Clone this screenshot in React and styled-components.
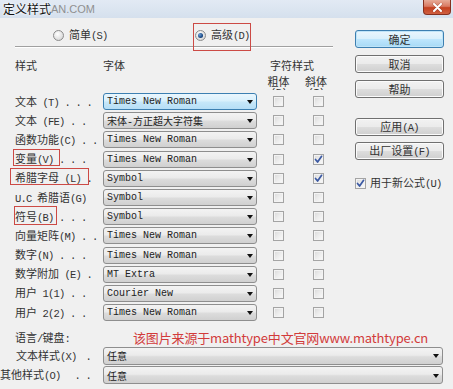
import React from 'react';
import styled, { createGlobalStyle, css } from 'styled-components';

const SIM = `"Noto Sans CJK SC", sans-serif`;
const SEL = `"Liberation Mono", "Noto Sans CJK SC", monospace`;

const Global = createGlobalStyle`
  html, body { margin: 0; padding: 0; background: #f0f0f0; }
  body { font-family: ${SIM}; }
`;

const Window = styled.div`
  width: 453px;
  height: 389px;
  overflow: hidden;
  background: #f0f0f0;
  font-family: ${SIM};
  font-size: 11px;
  color: #2a2a2a;
`;

/* half-width Latin run, like the Latin of SimSun */
const Lat = styled.span`
  font-family: "Liberation Mono", monospace;
  font-size: 10.5px;
  letter-spacing: -0.8px;
`;

const CJK_RE = /([\u2e80-\uffef]+)/;
const T = ({ children }) => (
  <>
    {String(children)
      .split(CJK_RE)
      .filter(Boolean)
      .map((s, i) =>
        CJK_RE.test(s) ? <React.Fragment key={i}>{s}</React.Fragment> : <Lat key={i}>{s}</Lat>
      )}
  </>
);

const TitleBar = styled.div`
  height: 18px;
  display: flex;
  align-items: flex-start;
  background: linear-gradient(#e2eaf4, #d5e0ed);
  padding-left: 3px;
`;

const Title = styled.span`
  font-family: "Noto Sans CJK SC", sans-serif;
  font-size: 12px;
  line-height: 18px;
  color: #111;
  text-shadow: 0 0 3px #fff, 0 0 2px #fff;
`;

const TitleGhost = styled.span`
  font-family: "Liberation Sans", sans-serif;
  font-size: 11px;
  line-height: 18px;
  color: #909090;
`;

const CloseBtn = styled.div`
  margin-left: auto;
  margin-right: 2px;
  width: 28px;
  height: 15px;
  box-sizing: border-box;
  border: 1px solid #86301f;
  border-top: none;
  border-radius: 0 0 4px 4px;
  background: linear-gradient(#e7ab98 0%, #d97a62 45%, #c4401f 55%, #cf6042 100%);
  display: flex;
  align-items: center;
  justify-content: center;
`;

const Upper = styled.div`
  display: flex;
`;

const Main = styled.div`
  width: 337px;
  padding-left: 15px;
  box-sizing: border-box;
`;

const Side = styled.div`
  width: 89px;
  margin-left: 18px;
  display: flex;
  flex-direction: column;
`;

const RadioRow = styled.div`
  margin-top: 9px;
  height: 16px;
  display: flex;
  align-items: center;
  padding-left: 38px;
`;

const RadioOption = styled.label`
  position: relative;
  display: flex;
  align-items: center;
  gap: 5px;
  width: ${p => p.$w || 'auto'};
  line-height: 16px;
  color: #333;
  ${p => p.$mark && css`
    &::after {
      content: '';
      position: absolute;
      inset: -3px -1px -7px -2px;
      border: 1px solid #cc4a45;
      pointer-events: none;
    }
  `}
`;

const Radio = styled.span`
  width: 11px;
  height: 11px;
  box-sizing: border-box;
  border-radius: 50%;
  border: 1px solid #8c8c8c;
  background: radial-gradient(circle at 40% 35%, #ffffff, #dcdcdc 70%, #c8c8c8);
  display: flex;
  align-items: center;
  justify-content: center;
  ${p => p.$on && css`
    &::after {
      content: '';
      width: 5px;
      height: 5px;
      border-radius: 50%;
      background: radial-gradient(circle at 35% 35%, #6fa0d8, #1a4a86 60%, #0b2c5a);
    }
  `}
`;

const Mark = styled.span`
  position: relative;
  &::after {
    content: '';
    position: absolute;
    inset: ${p => p.$inset};
    border: 1px solid #cc4a45;
    pointer-events: none;
  }
`;

const Separator = styled.div`
  margin-top: 3px;
  width: 318px;
  border-top: 1px solid #a0a0a0;
  border-bottom: 1px solid #ffffff;
`;

const HeadGrid = styled.div`
  margin-top: 10px;
  display: grid;
  grid-template-columns: 88px 154px 80px;
  line-height: 14px;
  color: #333;
`;

const HeadCell = styled.div`
  padding-left: ${p => p.$pl || 0}px;
  white-space: nowrap;
`;

const SubHead = styled.div`
  margin-top: 4px;
  height: 14px;
  overflow: hidden;
  display: grid;
  grid-template-columns: 88px 154px 43px 37px;
  line-height: 10px;
  color: #333;
`;

const SubCell = styled.div`
  grid-column: ${p => p.$col};
  text-align: center;
  padding-right: ${p => p.$pr || 0}px;
`;

const StyleGrid = styled.div`
  margin-top: 2px;
  display: grid;
  grid-template-columns: 88px 154px 43px 37px;
  grid-auto-rows: 19.2px;
  align-items: center;
`;

const Label = styled.div`
  white-space: pre;
  line-height: 14px;
  color: #333;
`;

const Select = styled.div`
  height: ${p => p.$h || 17}px;
  box-sizing: border-box;
  border: 1px solid #8e8e8e;
  border-radius: 3px;
  background: linear-gradient(#f3f3f3 0%, #ebebeb 45%, #dcdcdc 55%, #d0d0d0 100%);
  display: flex;
  align-items: center;
  justify-content: space-between;
  padding: 0 3px 0 3px;
  font-family: ${SEL};
  font-size: 10px;
  color: #222;
  white-space: nowrap;
  ${p => p.$active && css`
    border-color: #3c7fb1;
    background: linear-gradient(#eaf6fd 0%, #d9f0fc 45%, #c6e7f9 55%, #b6def6 100%);
  `}
`;

const Arrow = styled.span`
  width: 0;
  height: 0;
  border-left: 3.5px solid transparent;
  border-right: 3.5px solid transparent;
  border-top: 4px solid #111;
  margin-top: 1px;
`;

const CheckCell = styled.div`
  display: flex;
  justify-content: center;
`;

const Box = styled.span`
  width: 11px;
  height: 11px;
  box-sizing: border-box;
  border: 1px solid #a4a4a4;
  background: linear-gradient(135deg, #d9d9d9 0%, #ececec 50%, #fafafa 100%);
  box-shadow: inset 0 0 0 1px #f3f3f3;
  display: inline-flex;
  align-items: center;
  justify-content: center;
  flex: none;
`;

const Button = styled.button`
  margin: ${p => p.$mt}px 0 0 0;
  width: 89px;
  height: 18px;
  box-sizing: border-box;
  padding: 0;
  border: 1px solid #707070;
  border-radius: 3px;
  background: linear-gradient(#f2f2f2 0%, #ebebeb 48%, #dddddd 52%, #cfcfcf 100%);
  box-shadow: inset 0 0 0 1px #fbfbfb;
  font-family: ${SIM};
  font-size: 11px;
  line-height: 14px;
  color: #333;
  ${p => p.$primary && css`
    border-color: #3c7fb1;
    background: linear-gradient(#eaf6fd 0%, #d9f0fc 48%, #bee6fd 52%, #a7d9f5 100%);
    box-shadow: inset 0 0 0 1px #bfe4f8;
  `}
`;

const CheckRow = styled.div`
  margin-top: 15px;
  display: flex;
  align-items: center;
  gap: 4px;
  line-height: 14px;
  color: #333;
  white-space: nowrap;
`;

const LangRow = styled.div`
  margin-top: 8px;
  padding-left: 15px;
  display: grid;
  grid-template-columns: 118px auto;
  align-items: center;
  height: 14px;
  line-height: 14px;
  color: #333;
`;

const Watermark = styled.span`
  font-family: "Noto Sans CJK SC", sans-serif;
  font-size: 13px;
  letter-spacing: -0.15px;
  line-height: 16px;
  color: #d23b3b;
  white-space: nowrap;
`;

const BottomGrid = styled.div`
  margin-top: 1.5px;
  display: grid;
  grid-template-columns: 103px 340px;
  grid-auto-rows: 19.5px;
  align-items: center;
`;

const BottomLabel = styled.div`
  display: flex;
  padding-left: ${p => p.$pl}px;
  padding-right: 12px;
  white-space: pre;
  line-height: 14px;
  color: #333;
`;

const Dots = styled.span`
  margin-left: auto;
`;

const CheckMark = () => (
  <svg width="9" height="9" viewBox="0 0 9 9">
    <path d="M1.5 4.5 L3.6 7 L7.6 1.3" fill="none" stroke="#3b59a3" strokeWidth="1.7" strokeLinejoin="round" strokeLinecap="round" />
  </svg>
);

const CheckBox = ({ on }) => <Box>{on && <CheckMark />}</Box>;

const rows = [
  { label: '文本 (T) . . .', font: 'Times New Roman', active: true },
  { label: '文本 (FE) . .', font: '宋体-方正超大字符集' },
  { label: '函数功能(C) . . .', font: 'Times New Roman' },
  { mark: '变量(V)', inset: '-1px -6px 0 -2px', label: ' . . .', font: 'Times New Roman', italic: true },
  { mark: '希腊字母 (L)', inset: '-1px -8px 0 -5px', label: ' .', font: 'Symbol', italic: true },
  { label: 'U.C 希腊语(G)', font: 'Symbol' },
  { mark: '符号(B)', inset: '-2px -3px -1px -1px', label: ' . . .', font: 'Symbol' },
  { label: '向量矩阵(M) . .', font: 'Times New Roman' },
  { label: '数字(N) . . .', font: 'Times New Roman' },
  { label: '数学附加 (E) .', font: 'MT Extra' },
  { label: '用户 1(1) . .', font: 'Courier New' },
  { label: '用户 2(2) . .', font: 'Times New Roman' },
];

export default function App() {
  return (
    <>
      <Global />
      <Window>
        <TitleBar>
          <Title>定义样式</Title>
          <TitleGhost>AN.COM</TitleGhost>
          <CloseBtn>
            <svg width="11" height="9" viewBox="0 0 11 9">
              <path d="M2 1 L9 8 M9 1 L2 8" stroke="#5a1a10" strokeWidth="3" strokeLinecap="round" opacity="0.35" />
              <path d="M2 1 L9 8 M9 1 L2 8" stroke="#ffffff" strokeWidth="2" strokeLinecap="round" />
            </svg>
          </CloseBtn>
        </TitleBar>

        <Upper>
          <Main>
            <RadioRow>
              <RadioOption $w="142px">
                <Radio />
                <span><T>简单(S)</T></span>
              </RadioOption>
              <RadioOption $mark>
                <Radio $on />
                <span><T>高级(D)</T></span>
              </RadioOption>
            </RadioRow>
            <Separator />

            <HeadGrid>
              <HeadCell>样式</HeadCell>
              <HeadCell>字体</HeadCell>
              <HeadCell $pl={13}>字符样式</HeadCell>
            </HeadGrid>
            <SubHead>
              <SubCell $col={3}>粗体<br /><Lat>(B)</Lat></SubCell>
              <SubCell $col={4} $pr={5}>斜体<br /><Lat>(I)</Lat></SubCell>
            </SubHead>

            <StyleGrid>
              {rows.map((r, i) => (
                <React.Fragment key={i}>
                  <Label>
                    {r.mark && <Mark $inset={r.inset}><T>{r.mark}</T></Mark>}
                    <T>{r.label}</T>
                  </Label>
                  <Select $active={r.active}>
                    <span>{r.font}</span>
                    <Arrow />
                  </Select>
                  <CheckCell><CheckBox on={r.bold} /></CheckCell>
                  <CheckCell><CheckBox on={r.italic} /></CheckCell>
                </React.Fragment>
              ))}
            </StyleGrid>
          </Main>

          <Side>
            <Button $mt={12} $primary>确定</Button>
            <Button $mt={7}>取消</Button>
            <Button $mt={7}>帮助</Button>
            <Button $mt={20}><T>应用(A)</T></Button>
            <Button $mt={6}><T>出厂设置(F)</T></Button>
            <CheckRow>
              <CheckBox on />
              <span><T>用于新公式(U)</T></span>
            </CheckRow>
          </Side>
        </Upper>

        <LangRow>
          <span><T>语言/键盘:</T></span>
          <Watermark>该图片来源于mathtype中文官网www.mathtype.cn</Watermark>
        </LangRow>
        <BottomGrid>
          <BottomLabel $pl={16}>
            <span><T>文本样式(X)</T></span>
            <Dots><Lat>.</Lat></Dots>
          </BottomLabel>
          <Select $h={18}>
            <span>任意</span>
            <Arrow />
          </Select>
          <BottomLabel $pl={0}>
            <span><T>其他样式(O)</T></span>
            <Dots><Lat>. .</Lat></Dots>
          </BottomLabel>
          <Select $h={18}>
            <span>任意</span>
            <Arrow />
          </Select>
        </BottomGrid>
      </Window>
    </>
  );
}
